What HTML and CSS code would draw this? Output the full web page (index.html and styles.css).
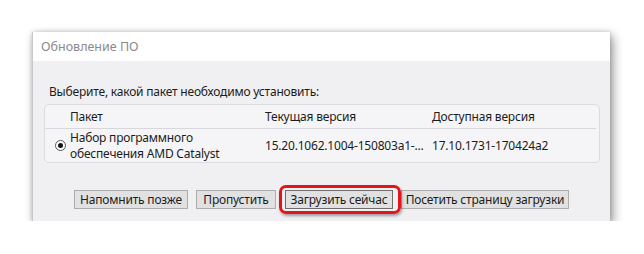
FILE: index.html
```html
<!DOCTYPE html>
<html lang="ru">
<head>
    <meta charset="UTF-8">
    <title>Обновление ПО</title>
    <link rel="stylesheet" href="styles.css">
</head>
<body>
    <div class="window">
        <div class="titlebar">Обновление ПО</div>
        <div class="content">
            <p class="prompt">Выберите, какой пакет необходимо установить:</p>
            <div class="table">
                <div class="row head">
                    <span class="c1">Пакет</span>
                    <span class="c2">Текущая версия</span>
                    <span class="c3">Доступная версия</span>
                </div>
                <div class="row item">
                    <span class="radio"></span>
                    <span class="c1">Набор программного<br>обеспечения AMD Catalyst</span>
                    <span class="c2">15.20.1062.1004-150803a1-...</span>
                    <span class="c3">17.10.1731-170424a2</span>
                </div>
            </div>
            <div class="buttons">
                <button class="b-later">Напомнить позже</button>
                <button class="b-skip">Пропустить</button>
                <button class="b-now">Загрузить сейчас</button>
                <button class="b-visit">Посетить страницу загрузки</button>
            </div>
        </div>
    </div>
</body>
</html>
```

FILE: styles.css
```css
body {
    margin: 0;
    background: #fff;
    font-family: 'Noto Sans', sans-serif;
    font-size: 12px;
    letter-spacing: -0.2px;
    color: #1c1c1c;
}

.window {
    margin: 32px 0 0 32px;
    width: 578px;
    height: 189px;
    background: #f0f0f2;
    border-left: 1px solid #c8c8c8;
    box-sizing: border-box;
    box-shadow: 3px 4px 10px rgba(0,0,0,0.4), 0 0 4px rgba(0,0,0,0.18);
}

.titlebar {
    height: 29px;
    line-height: 29px;
    background: #fff;
    color: #8a8a8a;
    padding-left: 8px;
    font-size: 12.5px;
    letter-spacing: 0;
}

.content {
    padding: 0 10px 0 11px;
}

.prompt {
    margin: 0;
    padding-top: 22px;
    padding-left: 5px;
    height: 20px;
    line-height: 18px;
}

.table {
    width: 556px;
    height: 59px;
    box-sizing: border-box;
    border: 1px solid #dcdce0;
    border-radius: 5px;
    background: #f5f5f7;
    margin-top: 1px;
}

.row {
    display: flex;
    position: relative;
}

.row.head {
    height: 23px;
    line-height: 23px;
    margin-right: 3px;
    border-bottom: 1px solid #d8d8dc;
}

.row.item {
    height: 34px;
    align-items: center;
    line-height: 16px;
}

.c1 {
    width: 195px;
    padding-left: 25px;
    flex: none;
}

.c2 {
    width: 167px;
    flex: none;
}

.c3 {
    flex: none;
}

.radio {
    position: absolute;
    left: 10px;
    top: 11px;
    width: 9px;
    height: 9px;
    border: 1px solid #555;
    border-radius: 50%;
    background: #fff;
}

.radio::after {
    content: '';
    position: absolute;
    left: 2px;
    top: 2px;
    width: 5px;
    height: 5px;
    border-radius: 50%;
    background: #111;
}

.buttons {
    display: flex;
    justify-content: center;
    gap: 8px;
    margin-top: 27px;
    padding-right: 1px;
}

button {
    font-family: 'Noto Sans', sans-serif;
    font-size: 12px;
    letter-spacing: -0.2px;
    color: #1c1c1c;
    height: 19px;
    padding: 0;
    line-height: 17px;
    background: #e1e1e1;
    border: 1px solid #adadad;
    border-radius: 0;
}

.b-later { width: 114px; }
.b-skip { width: 80px; }
.b-now {
    width: 108px;
    margin-left: 1px;
    position: relative;
    border-color: #6f6f6f;
}
.b-visit { width: 168px; }

.b-now::after {
    content: '';
    position: absolute;
    left: -7px;
    right: -9px;
    top: -6px;
    bottom: -6px;
    border: 3px solid #e2141c;
    border-radius: 7px;
    box-shadow: 1px 2px 3px rgba(0,0,0,0.35);
}
```
